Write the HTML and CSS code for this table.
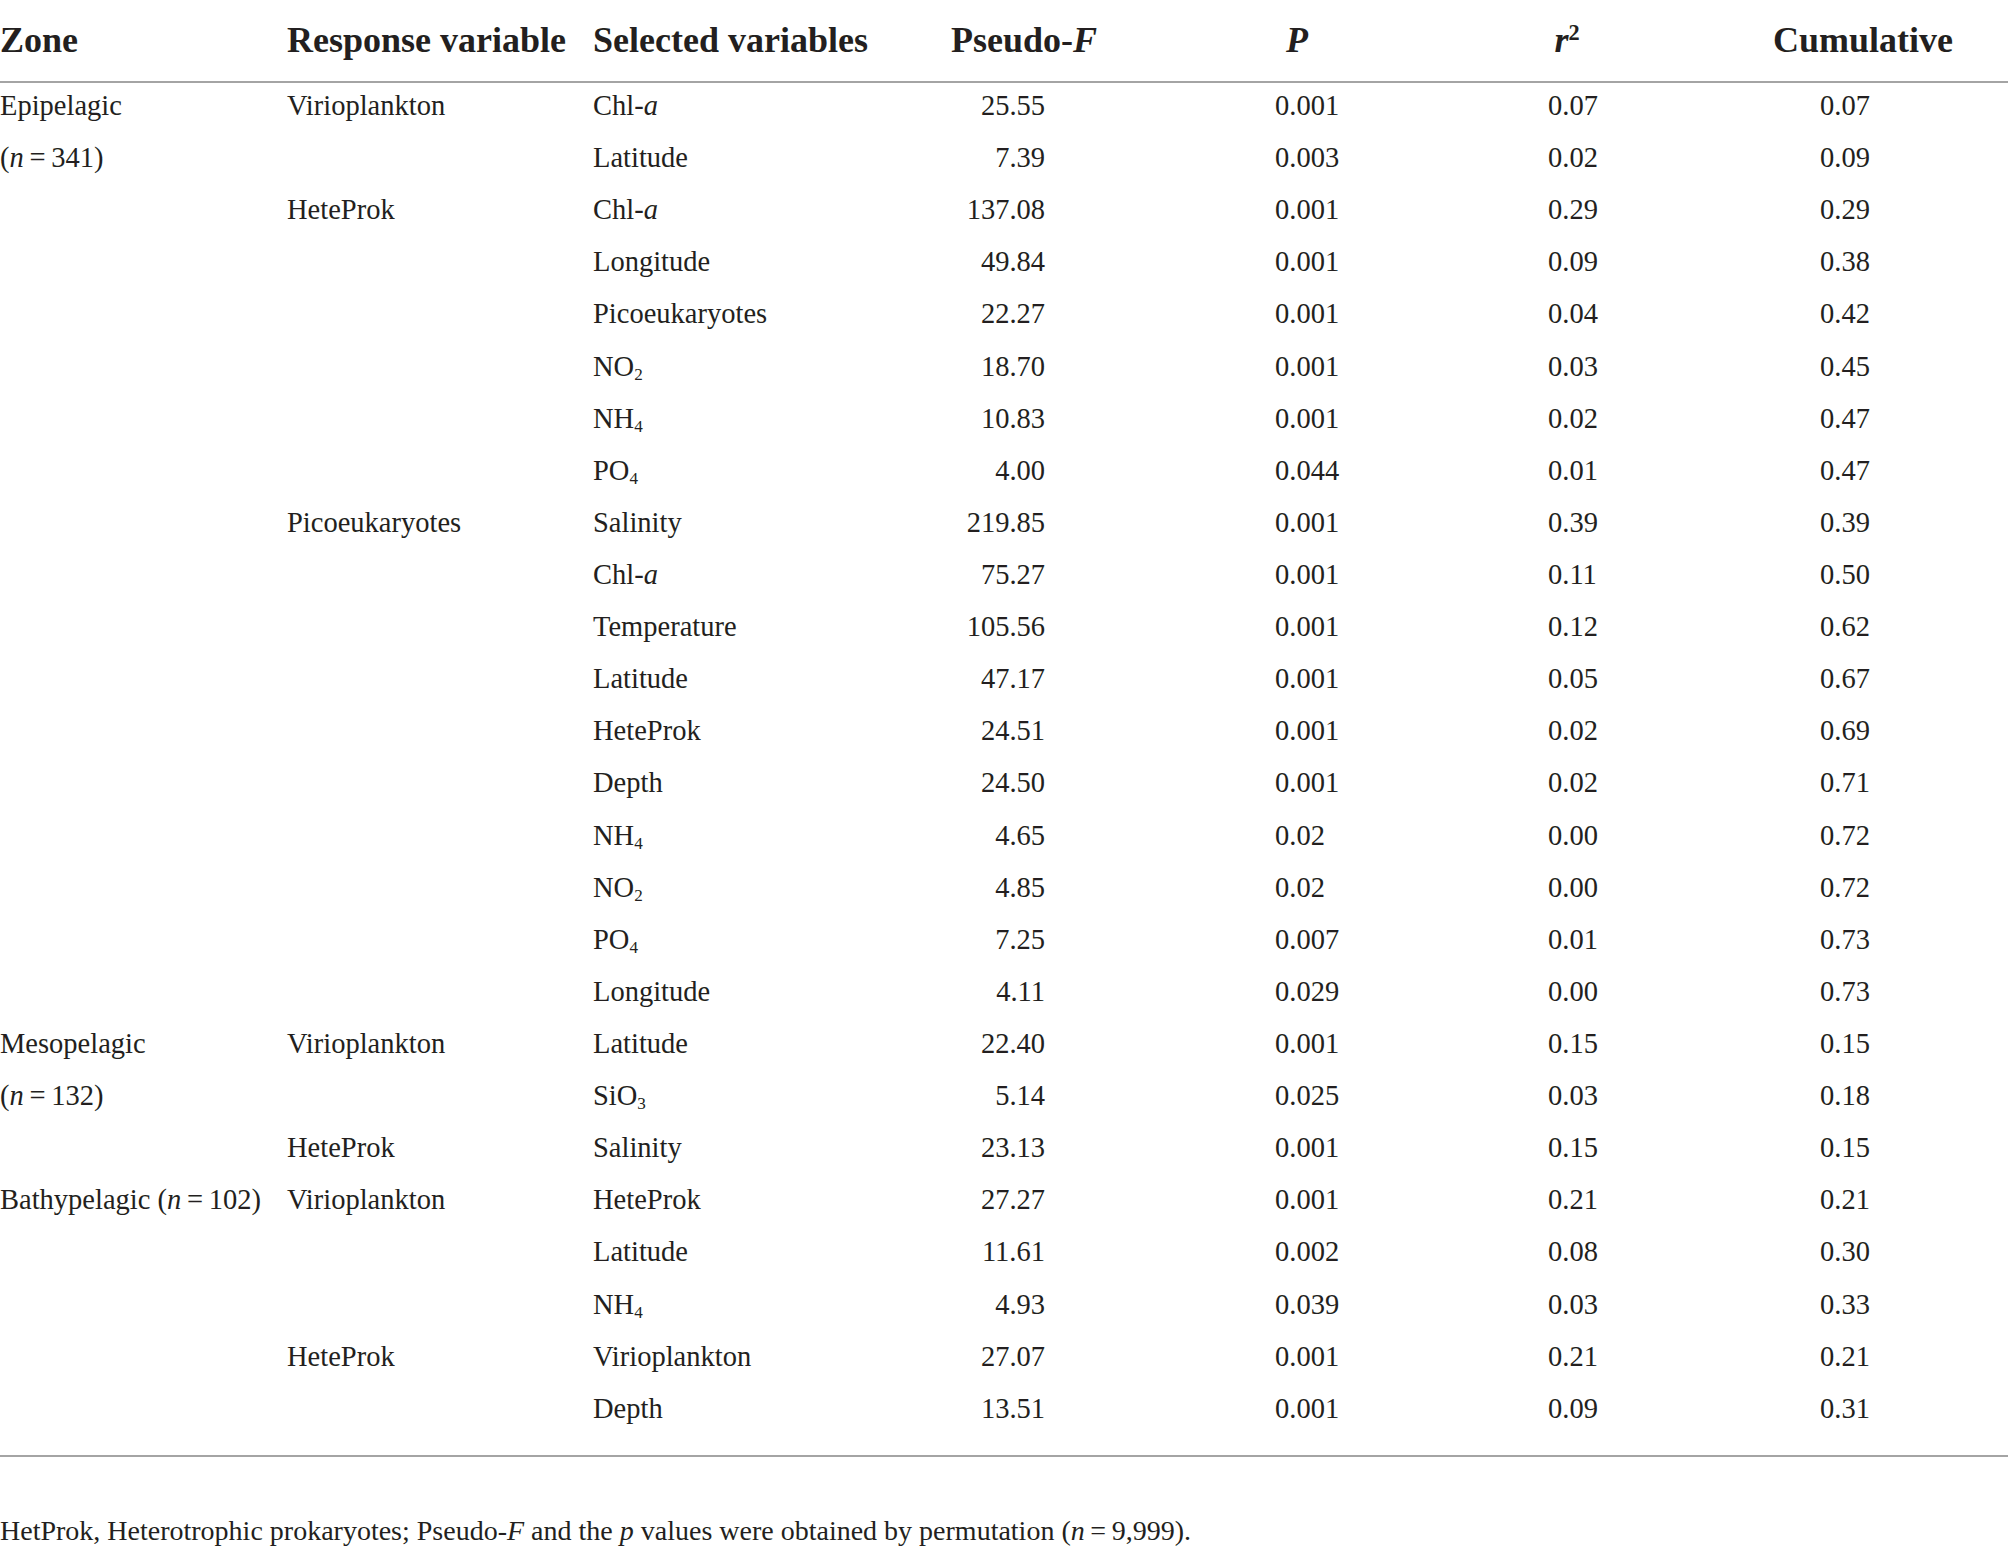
FILE: index.html
```html
<!DOCTYPE html>
<html lang="en">
<head>
<meta charset="utf-8">
<title>Table</title>
<link rel="stylesheet" href="styles.css">
</head>
<body>
<table class="tbl">
  <colgroup>
    <col class="c1"><col class="c2"><col class="c3"><col class="c4"><col class="c5"><col class="c6"><col class="c7">
  </colgroup>
  <thead>
    <tr>
      <th class="h-left">Zone</th>
      <th class="h-left">Response variable</th>
      <th class="h-left">Selected variables</th>
      <th class="h-c4">Pseudo-<i>F</i></th>
      <th class="h-c5"><i>P</i></th>
      <th class="h-c6"><i>r</i><sup>2</sup></th>
      <th class="h-c7">Cumulative</th>
    </tr>
  </thead>
  <tbody>
    <tr><td>Epipelagic</td><td>Virioplankton</td><td>Chl-<i>a</i></td><td class="v4">25.55</td><td class="v5">0.001</td><td class="v6">0.07</td><td class="v7">0.07</td></tr>
    <tr><td>(<i>n</i>&#8201;=&#8201;341)</td><td></td><td>Latitude</td><td class="v4">7.39</td><td class="v5">0.003</td><td class="v6">0.02</td><td class="v7">0.09</td></tr>
    <tr><td></td><td>HeteProk</td><td>Chl-<i>a</i></td><td class="v4">137.08</td><td class="v5">0.001</td><td class="v6">0.29</td><td class="v7">0.29</td></tr>
    <tr><td></td><td></td><td>Longitude</td><td class="v4">49.84</td><td class="v5">0.001</td><td class="v6">0.09</td><td class="v7">0.38</td></tr>
    <tr><td></td><td></td><td>Picoeukaryotes</td><td class="v4">22.27</td><td class="v5">0.001</td><td class="v6">0.04</td><td class="v7">0.42</td></tr>
    <tr><td></td><td></td><td>NO<sub>2</sub></td><td class="v4">18.70</td><td class="v5">0.001</td><td class="v6">0.03</td><td class="v7">0.45</td></tr>
    <tr><td></td><td></td><td>NH<sub>4</sub></td><td class="v4">10.83</td><td class="v5">0.001</td><td class="v6">0.02</td><td class="v7">0.47</td></tr>
    <tr><td></td><td></td><td>PO<sub>4</sub></td><td class="v4">4.00</td><td class="v5">0.044</td><td class="v6">0.01</td><td class="v7">0.47</td></tr>
    <tr><td></td><td>Picoeukaryotes</td><td>Salinity</td><td class="v4">219.85</td><td class="v5">0.001</td><td class="v6">0.39</td><td class="v7">0.39</td></tr>
    <tr><td></td><td></td><td>Chl-<i>a</i></td><td class="v4">75.27</td><td class="v5">0.001</td><td class="v6">0.11</td><td class="v7">0.50</td></tr>
    <tr><td></td><td></td><td>Temperature</td><td class="v4">105.56</td><td class="v5">0.001</td><td class="v6">0.12</td><td class="v7">0.62</td></tr>
    <tr><td></td><td></td><td>Latitude</td><td class="v4">47.17</td><td class="v5">0.001</td><td class="v6">0.05</td><td class="v7">0.67</td></tr>
    <tr><td></td><td></td><td>HeteProk</td><td class="v4">24.51</td><td class="v5">0.001</td><td class="v6">0.02</td><td class="v7">0.69</td></tr>
    <tr><td></td><td></td><td>Depth</td><td class="v4">24.50</td><td class="v5">0.001</td><td class="v6">0.02</td><td class="v7">0.71</td></tr>
    <tr><td></td><td></td><td>NH<sub>4</sub></td><td class="v4">4.65</td><td class="v5">0.02</td><td class="v6">0.00</td><td class="v7">0.72</td></tr>
    <tr><td></td><td></td><td>NO<sub>2</sub></td><td class="v4">4.85</td><td class="v5">0.02</td><td class="v6">0.00</td><td class="v7">0.72</td></tr>
    <tr><td></td><td></td><td>PO<sub>4</sub></td><td class="v4">7.25</td><td class="v5">0.007</td><td class="v6">0.01</td><td class="v7">0.73</td></tr>
    <tr><td></td><td></td><td>Longitude</td><td class="v4">4.11</td><td class="v5">0.029</td><td class="v6">0.00</td><td class="v7">0.73</td></tr>
    <tr><td>Mesopelagic</td><td>Virioplankton</td><td>Latitude</td><td class="v4">22.40</td><td class="v5">0.001</td><td class="v6">0.15</td><td class="v7">0.15</td></tr>
    <tr><td>(<i>n</i>&#8201;=&#8201;132)</td><td></td><td>SiO<sub>3</sub></td><td class="v4">5.14</td><td class="v5">0.025</td><td class="v6">0.03</td><td class="v7">0.18</td></tr>
    <tr><td></td><td>HeteProk</td><td>Salinity</td><td class="v4">23.13</td><td class="v5">0.001</td><td class="v6">0.15</td><td class="v7">0.15</td></tr>
    <tr><td>Bathypelagic (<i>n</i>&#8201;=&#8201;102)</td><td>Virioplankton</td><td>HeteProk</td><td class="v4">27.27</td><td class="v5">0.001</td><td class="v6">0.21</td><td class="v7">0.21</td></tr>
    <tr><td></td><td></td><td>Latitude</td><td class="v4">11.61</td><td class="v5">0.002</td><td class="v6">0.08</td><td class="v7">0.30</td></tr>
    <tr><td></td><td></td><td>NH<sub>4</sub></td><td class="v4">4.93</td><td class="v5">0.039</td><td class="v6">0.03</td><td class="v7">0.33</td></tr>
    <tr><td></td><td>HeteProk</td><td>Virioplankton</td><td class="v4">27.07</td><td class="v5">0.001</td><td class="v6">0.21</td><td class="v7">0.21</td></tr>
    <tr class="last"><td></td><td></td><td>Depth</td><td class="v4">13.51</td><td class="v5">0.001</td><td class="v6">0.09</td><td class="v7">0.31</td></tr>
  </tbody>
</table>
<p class="note">HetProk, Heterotrophic prokaryotes; Pseudo-<i>F</i> and the <i>p</i> values were obtained by permutation (<i>n</i>&#8201;=&#8201;9,999).</p>
</body>
</html>
```

FILE: styles.css
```css
html, body {
  margin: 0;
  padding: 0;
  background: #ffffff;
}

body {
  width: 2008px;
  font-family: "Liberation Serif", "Times New Roman", serif;
  color: #231f20;
}

.tbl {
  width: 2008px;
  table-layout: fixed;
  border-collapse: collapse;
  border-spacing: 0;
}

.c1 { width: 287px; }
.c2 { width: 306px; }
.c3 { width: 311px; }
.c4 { width: 240px; }
.c5 { width: 306px; }
.c6 { width: 234px; }
.c7 { width: 324px; }

.tbl th {
  font-size: 36px;
  font-weight: 700;
  line-height: 41px;
  padding: 20px 0 20px 0;
  border-bottom: 2px solid #a4a4a4;
  white-space: nowrap;
  vertical-align: baseline;
}

.h-left { text-align: left; }
.h-c4 { text-align: center; }
.h-c5 { text-align: center; }
.h-c6 { text-align: center; }
.h-c7 { text-align: center; padding-left: 34px !important; }

.tbl th sup {
  font-size: 0.62em;
  line-height: 0;
  vertical-align: 0.55em;
  font-style: normal;
}

.tbl td {
  font-size: 28.5px;
  line-height: 46px;
  padding: 0 0 6.12px 0;
  white-space: nowrap;
  vertical-align: baseline;
  text-align: left;
}

.tbl td sub {
  font-size: 0.6em;
  line-height: 0;
  vertical-align: -0.24em;
}

.tbl td.v4 { text-align: right; padding-right: 99px; }
.tbl td.v5 { padding-left: 131px; }
.tbl td.v6 { padding-left: 98px; }
.tbl td.v7 { padding-left: 136px; }

.tbl tr.last td {
  padding-bottom: 23px;
  border-bottom: 2px solid #a4a4a4;
}

.note {
  margin: 58px 0 0 0;
  font-size: 28px;
  line-height: 32px;
}
```
